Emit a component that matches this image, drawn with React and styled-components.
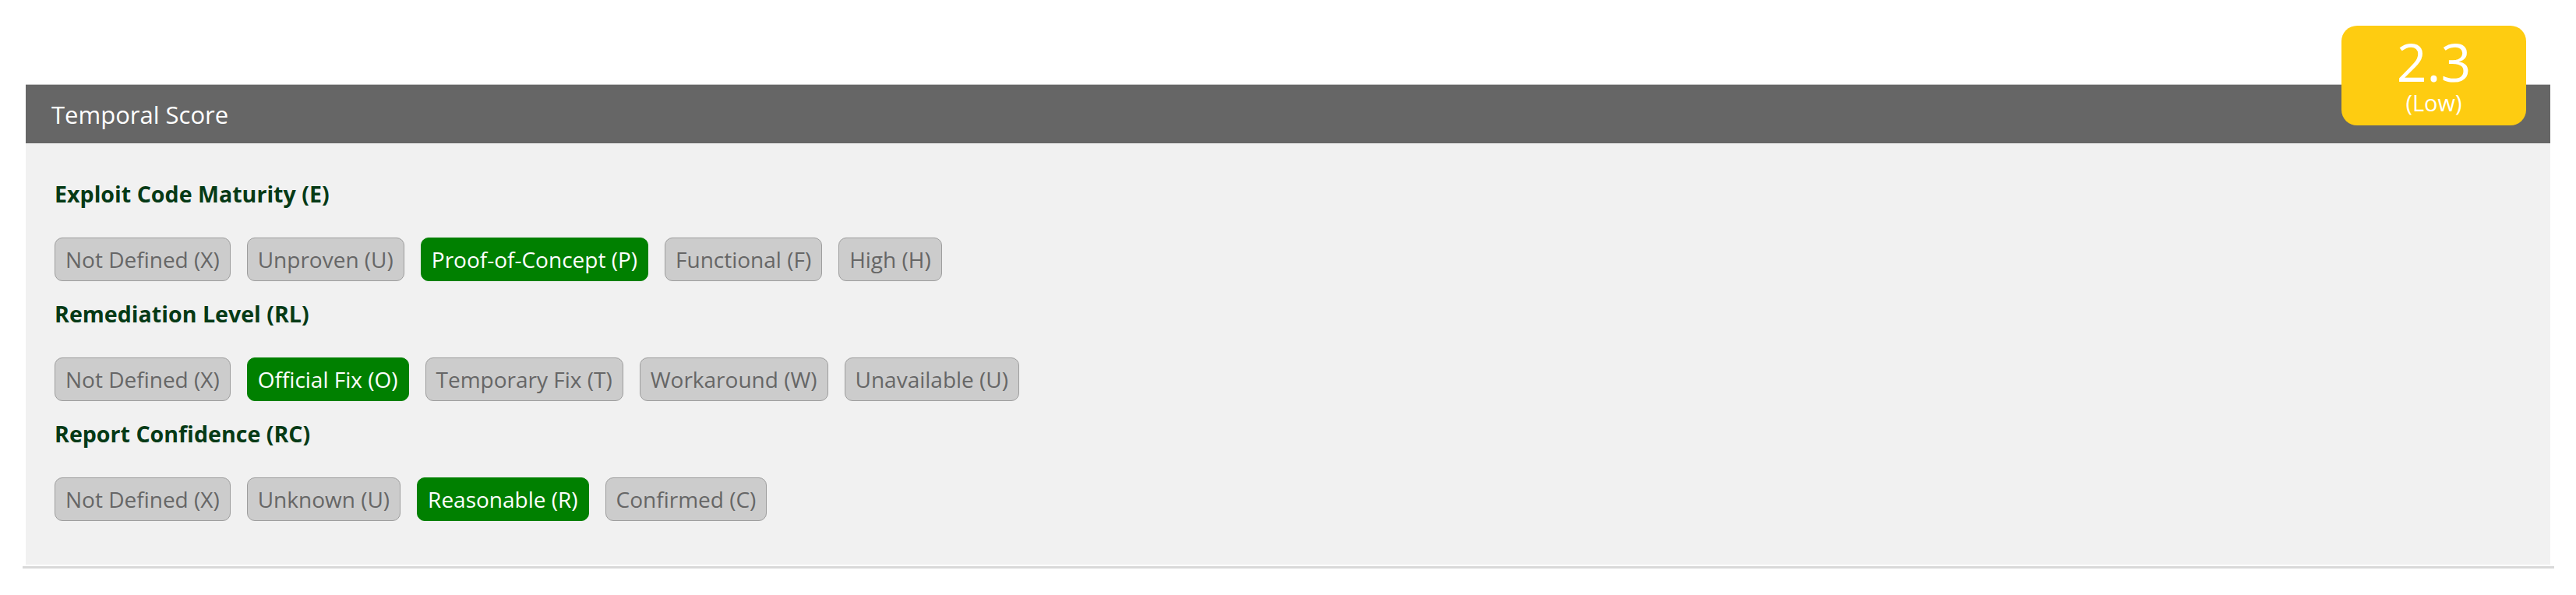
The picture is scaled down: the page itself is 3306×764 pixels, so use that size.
import React from 'react';
import styled, { createGlobalStyle } from 'styled-components';

const GlobalStyle = createGlobalStyle`
  html, body {
    margin: 0;
    padding: 0;
    background: #fff;
    font-family: "Open Sans", "Liberation Sans", sans-serif;
  }
`;

const Page = styled.div`
  padding: 108px 33px 0;
`;

const Panel = styled.section`
  position: relative;
`;

const Header = styled.div`
  height: 75px;
  border-top: 1px solid #c8c8c8;
  background: #666;
  display: flex;
  align-items: center;
  padding-left: 33px;
  color: #fff;
  font-size: 31px;
`;

const ScoreBadge = styled.div`
  position: absolute;
  top: -75px;
  right: 31px;
  width: 237px;
  height: 128px;
  box-sizing: border-box;
  padding-top: 12px;
  border-radius: 20px;
  background: #fecc11;
  color: #fff;
  display: flex;
  flex-direction: column;
  align-items: center;
`;

const ScoreValue = styled.div`
  font-size: 68px;
  line-height: 68px;
`;

const ScoreLabel = styled.div`
  margin-top: 4px;
  font-size: 29px;
  line-height: 29px;
`;

const Body = styled.div`
  background: #f1f1f1;
  padding: 46px 36px 56px 37px;
`;

const Metric = styled.div`
  & + & {
    margin-top: 23px;
  }
`;

const MetricTitle = styled.div`
  font-size: 28.6px;
  line-height: 38px;
  font-weight: 700;
  color: #063a16;
`;

const Options = styled.div`
  display: flex;
  gap: 21px;
  margin-top: 37px;
`;

const Option = styled.div`
  font-size: 28px;
  line-height: 38px;
  padding: 8px 13px;
  border: 1px solid ${p => (p.$active ? '#008000' : '#9d9d9d')};
  border-radius: 10px;
  background: ${p => (p.$active ? '#008000' : '#cccccc')};
  color: ${p => (p.$active ? '#fff' : '#666')};
  white-space: nowrap;
`;

const Divider = styled.div`
  height: 3px;
  margin: 2px -5px 0 -4px;
  background: #d9d9d9;
`;

const metrics = [
  {
    title: 'Exploit Code Maturity (E)',
    options: ['Not Defined (X)', 'Unproven (U)', 'Proof-of-Concept (P)', 'Functional (F)', 'High (H)'],
    active: 2,
  },
  {
    title: 'Remediation Level (RL)',
    options: ['Not Defined (X)', 'Official Fix (O)', 'Temporary Fix (T)', 'Workaround (W)', 'Unavailable (U)'],
    active: 1,
  },
  {
    title: 'Report Confidence (RC)',
    options: ['Not Defined (X)', 'Unknown (U)', 'Reasonable (R)', 'Confirmed (C)'],
    active: 2,
  },
];

const App = () => {
  return (
    <Page>
      <GlobalStyle />
      <Panel>
        <Header>Temporal Score</Header>
        <ScoreBadge>
          <ScoreValue>2.3</ScoreValue>
          <ScoreLabel>(Low)</ScoreLabel>
        </ScoreBadge>
        <Body>
          {metrics.map(m => (
            <Metric key={m.title}>
              <MetricTitle>{m.title}</MetricTitle>
              <Options>
                {m.options.map((o, i) => (
                  <Option key={o} $active={i === m.active}>{o}</Option>
                ))}
              </Options>
            </Metric>
          ))}
        </Body>
        <Divider />
      </Panel>
    </Page>
  );
};

export default App;
